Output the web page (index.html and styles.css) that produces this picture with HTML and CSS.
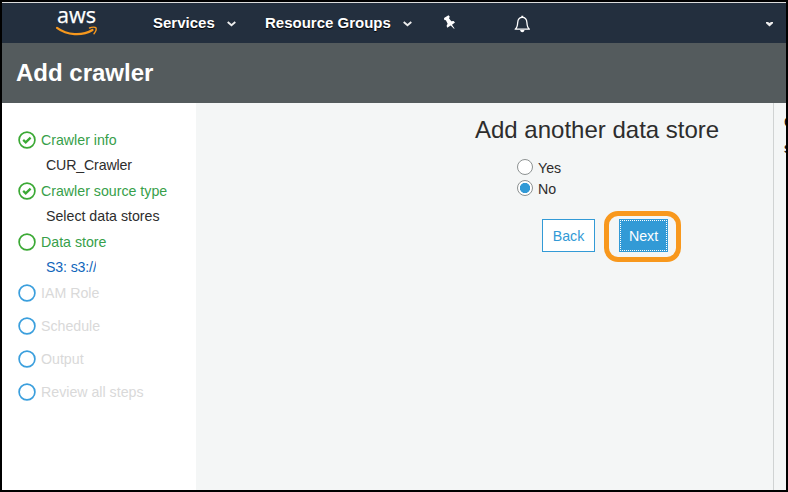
FILE: index.html
```html
<!DOCTYPE html>
<html lang="en">
<head>
<meta charset="utf-8">
<title>Add crawler</title>
<link rel="stylesheet" href="styles.css">
</head>
<body>
<div class="frame">
  <nav class="topnav">
    <svg class="logo" width="44" height="30" viewBox="0 0 44 30">
      <text class="logo-text" x="1" y="14" textLength="39" lengthAdjust="spacingAndGlyphs">aws</text>
      <path d="M1 18.8 C11 26.3 26 27.3 36.5 21" fill="none" stroke="#f7981d" stroke-width="2.2" stroke-linecap="round"/>
      <path d="M33.5 19 C36 17.8 39.5 18 40 18.8 C40.5 20.3 39.5 23 38 24.8" fill="none" stroke="#f7981d" stroke-width="1.4" stroke-linecap="round"/>
    </svg>
    <span class="nav-item services">Services</span>
    <svg class="chev chev-services" width="9" height="6" viewBox="0 0 9 6"><path d="M.7 1 L4.5 4.2 L8.3 1" /></svg>
    <span class="nav-item groups">Resource Groups</span>
    <svg class="chev chev-groups" width="9" height="6" viewBox="0 0 9 6"><path d="M.7 1 L4.5 4.2 L8.3 1" /></svg>
    <svg class="pin" width="14" height="15" viewBox="0 0 14 15"><path d="M1 3 L5.5 .3 L6.8 1.8 L6 3.2 L8.3 6.3 L10.6 6 L12 7.6 L9 9.7 L11.6 13.5 L11 13.7 L7.7 10.4 L4.2 12.7 L3.6 10.7 L4.6 8.7 L2.9 5.3 L1.3 4.9 Z" fill="#fff"/></svg>
    <svg class="bell" width="17" height="18" viewBox="0 0 17 18">
      <path d="M1.2 14.2 C3.2 12.6 3.5 11 3.7 7.5 C3.9 4.3 5.3 2.3 8.3 2.3 C11.3 2.3 12.7 4.3 12.9 7.5 C13.1 11 13.4 12.6 15.4 14.2 Z" fill="none" stroke="#fff" stroke-width="1.3" stroke-linejoin="round"/>
      <path d="M7.3 2 V.7 H9.3 V2 M6 15 H10.6 Q10 17.2 8.3 17.2 Q6.6 17.2 6 15 Z" fill="#fff"/>
    </svg>
    <svg class="caret" width="7" height="5" viewBox="0 0 7 5"><path d="M0 0 H2 L3.5 1 L5 0 H7 V1.3 L3.5 4.5 L0 1.3 Z" fill="#eee"/></svg>
  </nav>
  <header class="header"><h1>Add crawler</h1></header>
  <div class="body">
    <aside class="steps">
      <div class="step done"><svg class="ring" viewBox="0 0 18 18"><circle cx="9" cy="9" r="7.9"/><path d="M5.2 8.9 L7.7 11.3 L12.6 6.6"/></svg><span>Crawler info</span></div>
      <div class="detail name">CUR_Crawler</div>
      <div class="step done"><svg class="ring" viewBox="0 0 18 18"><circle cx="9" cy="9" r="7.9"/><path d="M5.2 8.9 L7.7 11.3 L12.6 6.6"/></svg><span>Crawler source type</span></div>
      <div class="detail">Select data stores</div>
      <div class="step done"><svg class="ring" viewBox="0 0 18 18"><circle cx="9" cy="9" r="7.9"/></svg><span>Data store</span></div>
      <div class="detail link">S3: s3://</div>
      <div class="step todo"><svg class="ring" viewBox="0 0 18 18"><circle cx="9" cy="9" r="7.9"/></svg><span>IAM Role</span></div>
      <div class="step todo"><svg class="ring" viewBox="0 0 18 18"><circle cx="9" cy="9" r="7.9"/></svg><span>Schedule</span></div>
      <div class="step todo"><svg class="ring" viewBox="0 0 18 18"><circle cx="9" cy="9" r="7.9"/></svg><span>Output</span></div>
      <div class="step todo"><svg class="ring" viewBox="0 0 18 18"><circle cx="9" cy="9" r="7.9"/></svg><span>Review all steps</span></div>
    </aside>
    <main class="content">
      <h2>Add another data store</h2>
      <div class="options">
        <div class="option"><span class="radio"></span><span>Yes</span></div>
        <div class="option"><span class="radio checked"></span><span>No</span></div>
      </div>
      <div class="actions">
        <button class="btn back">Back</button>
        <div class="highlight"><button class="btn next">Next</button></div>
      </div>
    </main>
    <section class="side"><div>C</div><div>s</div></section>
  </div>
</div>
</body>
</html>
```
FILE: styles.css
```css
* { box-sizing: border-box; }
body { margin: 0; font-family: "Liberation Sans", Arial, sans-serif; font-size: 14px; color: #2d2d2d; }
h1, h2 { margin: 0; }
.frame { width: 788px; height: 492px; border: 2px solid #000; display: flex; flex-direction: column; overflow: hidden; }
.topnav { height: 41px; flex: none; border-top: 1px solid #dcdcdc; background: #232f3e; display: flex; align-items: flex-start; }
.logo { margin: 6px 0 0 54px; flex: none; overflow: visible; }
.logo-text { font-family: "Open Sans", sans-serif; font-size: 21.5px; fill: #fff; stroke: #fff; stroke-width: .25px; }
.nav-item { font-size: 15px; font-weight: bold; line-height: 18px; margin-top: 11px; color: #fff; text-shadow: 0 1px 1px #000; white-space: nowrap; flex: none; }
.services { margin-left: 53px; width: 74px; }
.groups { margin-left: 29px; width: 138px; }
.chev { margin-top: 18px; flex: none; }
.chev path { fill: none; stroke: #eee; stroke-width: 1.8; }
.pin { margin: 12px 0 0 31px; flex: none; }
.bell { margin: 12px 0 0 57px; flex: none; }
.caret { margin: 19px 13px 0 auto; flex: none; }
.header { height: 60px; flex: none; background: #545b5d; color: #fff; display: flex; align-items: center; padding-left: 14px; }
h1 { font-size: 24px; line-height: 28px; }
.body { flex: 1; display: flex; min-height: 0; background: #f4f6f6; }
.steps { width: 194px; flex: none; background: #fff; padding: 24px 0 0 16px; font-size: 14.2px; white-space: nowrap; }
.step { height: 26px; display: flex; align-items: center; gap: 5px; }
.ring { width: 18px; height: 18px; fill: none; stroke: currentColor; stroke-width: 1.7; flex: none; }
.ring path { stroke-width: 2.3; }
.done { color: #3ba935; }
.done span { color: #37a04a; }
.todo { color: #3b9fdd; }
.todo span { color: #d9d9d9; }
.todo + .todo { margin-top: 7px; }
.detail { height: 25px; line-height: 25px; margin-left: 28px; }
.name { letter-spacing: -.15px; }
.link { color: #1166bb; width: 50px; overflow: hidden; letter-spacing: -.15px; }
.content { flex: none; border-right: 1px solid #d0d3d3; width: 578px; padding: 13px 0 0 279px; }
h2 { font-size: 24px; font-weight: normal; line-height: 28px; white-space: nowrap; }
.options { padding: 12px 0 0 42px; font-size: 14.2px; }
.option { display: flex; align-items: center; gap: 5px; height: 21px; }
.radio { width: 16px; height: 16px; border: 1px solid #8d9292; border-radius: 50%; background: #fff; }
.checked { background: radial-gradient(circle, #329ad6 4.8px, #fff 5.4px); }
.option span:last-child { padding-top: 2px; }
.actions { display: flex; align-items: center; padding: 13px 0 0 67px; gap: 9px; }
.btn { height: 33px; padding: 0; font: 14.2px "Liberation Sans", Arial, sans-serif; border: 1px solid #329ad6; }
.back { width: 53px; background: #fff; color: #329ad6; margin-top: -2px; }
.next { width: 49px; background: #329ad6; color: #fff; outline: 1px dotted #fff; outline-offset: -2px; }
.highlight { width: 77px; height: 51px; border: 5px solid #f8981d; border-radius: 14px; display: flex; align-items: flex-start; padding: 3px 0 0 10px; }
.side { flex: 1; overflow: hidden; padding: 6px 0 0 10px; line-height: 26px; font-size: 14.2px; color: #000; }
```
